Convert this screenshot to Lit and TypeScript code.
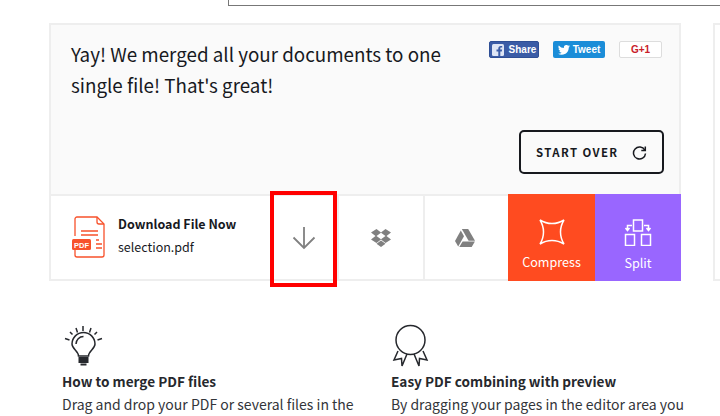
import { LitElement, html, css } from "lit";
import { customElement } from "lit/decorators.js";

@customElement("app-root")
export class AppRoot extends LitElement {
  static styles = css`
    :host { display: block; width: 720px; height: 416px; overflow: hidden; position: relative; background: #fff; font-family: "Noto Sans CJK JP", "Noto Sans", sans-serif; color: #17191e; }
    .topbar { position: absolute; left: 228px; top: -10px; right: -4px; height: 14px; border: 1px solid #777; border-width: 1px 0 1px 1px; }
    .page { display: flex; gap: 32px; padding: 23px 0 0 49px; width: 800px; box-sizing: border-box; }
    .card { width: 632px; height: 258px; box-sizing: border-box; border: 2px solid #eee; border-bottom: 0; border-right: 0; background: #fafafa; display: flex; flex-direction: column; flex: none; }
    .side { width: 100px; height: 258px; box-sizing: border-box; border: 2px solid #eee; background: #fff; flex: none; }
    .hero { height: 169px; box-sizing: border-box; padding: 13px 17px 0 20px; border-right: 2px solid #eee; display: grid; grid-template-columns: 1fr auto; position: relative; }
    .msg { margin: 0; font-size: 18.8px; line-height: 31px; width: 400px; color: #17191e; }
    .social { display: flex; gap: 14px; align-items: flex-start; margin-top: 3px; }
    .btn { height: 17px; box-sizing: border-box; border-radius: 2px; color: #fff; display: flex; align-items: center; justify-content: center; font: bold 10px "Liberation Sans", sans-serif; gap: 5px; }
    .fb { width: 50px; background: #3b5ca6; border: 1px solid #2f4f95; }
    .tw { width: 52px; background: #1b8dd8; gap: 3px; }
    .gp { width: 43px; background: #fff; border: 1px solid #ddd; color: #c9202a; }
    .start { position: absolute; right: 15px; top: 105px; width: 145px; height: 44px; box-sizing: border-box; border: 2px solid #17191e; border-radius: 5px; display: flex; align-items: center; padding-left: 15px; gap: 14px; font-size: 11.4px; font-weight: 700; letter-spacing: 1.4px; }
    .row { height: 87px; display: flex; background: #fff; border-top: 2px solid #eee; border-bottom: 2px solid #eee; box-sizing: border-box; }
    .cell { display: flex; align-items: center; justify-content: center; border-right: 2px solid #eee; box-sizing: border-box; color: #808080; flex: none; }
    .dl { width: 219px; border-right: 0; justify-content: flex-start; padding-left: 21px; gap: 12px; }
    .dl svg { margin-top: -2px; }
    .names { margin-top: -6px; }
    .dl .t { font-size: 12.5px; font-weight: 700; color: #17191e; line-height: 23px; }
    .dl .f { font-size: 12.5px; color: #17191e; line-height: 23px; }
    .arrow { width: 69px; }
    .box { width: 86px; }
    .drive { width: 83px; border-right: 0; padding-right: 3px; }
    .act { flex-direction: column; margin: -2px 0; padding-top: 15px; color: #fff; font-size: 12.6px; gap: 7px; border: 0; }
    .compress { width: 87px; background: #ff4b20; }
    .split { width: 86px; background: #9966ff; }
    .hl { position: absolute; left: 270px; top: 191px; width: 67px; height: 96px; box-sizing: border-box; border: 4px solid #f00; }
    .info { display: grid; grid-template-columns: 329px 329px; padding: 0 0 0 62px; margin-top: 45px; }
    .info .ic { height: 44px; display: block; margin-left: 1px; overflow: visible; }
    .info h3 { margin: 0; font-size: 13.6px; line-height: 23px; font-weight: 700; color: #26282d; }
    .info p { margin: 0; font-size: 14px; line-height: 23px; white-space: nowrap; color: #33353a; }
  `;
  render() {
    return html`
      <div class="topbar"></div>
      <div class="page">
        <div class="card">
          <div class="hero">
            <p class="msg">Yay! We merged all your documents to one single file! That's great!</p>
            <div class="social">
              <div class="btn fb"><svg width="12" height="12" viewBox="0 0 12 12"><rect width="12" height="12" rx="1.5" fill="#dfe6f5"/><path d="M8.3 12V7.4h1.5l.3-1.8H8.3V4.5c0-.6.2-.9.9-.9h1V2c-.4 0-.9-.1-1.4-.1-1.5 0-2.5.9-2.5 2.5v1.2H4.5v1.8h1.8V12z" fill="#3b5ca6"/></svg>Share</div>
              <div class="btn tw"><svg width="12" height="10" viewBox="0 0 24 20"><path fill="#fff" d="M24 2.4c-.9.4-1.8.7-2.8.8 1-.6 1.8-1.6 2.2-2.7-1 .6-2 1-3.1 1.2A4.9 4.9 0 0 0 11.900 6.200 14 14 0 0 1 1.700.9a4.900 4.900 0 0 0 1.500 6.600c-.8 0-1.600-.2-2.200-.6v.1c0 2.400 1.700 4.400 3.900 4.800-.7.2-1.500.2-2.200.1.600 2 2.400 3.400 4.600 3.400A9.900 9.900 0 0 1 0 17.300 14 14 0 0 0 7.500 19.500c9.100 0 14-7.500 14-14v-.6c1-.7 1.800-1.600 2.500-2.500z"/></svg>Tweet</div>
              <div class="btn gp">G+1</div>
            </div>
            <div class="start">START OVER
              <svg width="15" height="15" viewBox="0 0 15 15" fill="none" stroke="#17191e" stroke-width="1.500"><path d="M12.800 5.200A6 6 0 1 0 13.500 8.500"/><path d="M13.300 1.500v4h-4"/></svg>
            </div>
          </div>
          <div class="row">
            <div class="cell dl">
              <svg width="34" height="44" viewBox="0 0 34 44" fill="none" stroke="#f7512b" stroke-width="1.300">
                <path d="M3 21V4a2 2 0 0 1 2-2h20l7 7v31a2 2 0 0 1-2 2H5a2 2 0 0 1-2-2v-6"/>
                <path d="M25 2v5a2 2 0 0 0 2 2h5"/>
                <path d="M9 16h17M9 20h17"/>
                <path d="M24 25h3M24 29h6M24 33h6"/>
                <rect x="0" y="24" width="19" height="11" rx="1.500" fill="#f7512b" stroke="none"/>
                <text x="9.500" y="32.500" text-anchor="middle" font-size="7.500" font-weight="700" fill="#fff" stroke="none" font-family="Liberation Sans, sans-serif">PDF</text>
              </svg>
              <div class="names"><div class="t">Download File Now</div><div class="f">selection.pdf</div></div>
            </div>
            <div class="cell arrow"><svg width="24" height="24" viewBox="0 0 24 24" fill="none" stroke="#808080" stroke-width="1.800"><path d="M12 1v21M1.500 11.500 12 22l10.500-10.500"/></svg></div>
            <div class="cell box"><svg width="20" height="18" viewBox="0 0 20 18" fill="#808080"><path d="M5.500 0 0 3.500 4.500 7 0 10.500l5.500 3.500L10 10.500 14.500 14 20 10.500 15.500 7 20 3.500 14.500 0 10 3.500zM10 3.800 14.500 7 10 10.200 5.500 7zM5.500 14.800l4.500 3.200 4.500-3.200L10 11.600z"/></svg></div>
            <div class="cell drive"><svg width="20" height="18" viewBox="0 0 20 18" fill="#808080"><path d="M6.800 0h6.400l6.800 11.700h-6.400z"/><path d="M5.800 1.600 9 7.200 3.200 17.500 0 12z"/><path d="M4.300 18l3.300-5.600h12.300L16.700 18z"/></svg></div>
            <div class="cell act compress">
              <svg width="26" height="26" viewBox="0 0 26 26" fill="none" stroke="#fff" stroke-width="1.500"><path d="M1 1C5 3.500 9 4.500 13 4.500S21 3.500 25 1C22.500 5 21.500 9 21.500 13S22.500 21 25 25C21 22.500 17 21.500 13 21.500S5 22.500 1 25C3.500 21 4.500 17 4.500 13S3.500 5 1 1z"/></svg>
              Compress</div>
            <div class="cell act split">
              <svg width="28" height="27" viewBox="0 0 28 27" fill="none" stroke="#fff" stroke-width="1.500"><rect x="9.500" y="1" width="9" height="11"/><rect x="1.500" y="15.500" width="9" height="11"/><rect x="17.500" y="15.500" width="9" height="11"/><path d="M8 6.500H3.500v5M1.500 9l2 2.500 2-2.500M20 6.500h4.500v5M22.500 9l2 2.500 2-2.500"/></svg>
              Split</div>
          </div>
        </div>
        <div class="side"></div>
      </div>
      <div class="hl"></div>
      <div class="info">
        <div>
          <svg class="ic" width="44" height="44" viewBox="0 0 44 44" fill="none" stroke="#26282d" stroke-width="1.500">
            <path d="M15.500 30c0-5-6.500-7-6.500-12a11.500 11.500 0 0 1 23 0c0 5-6.500 7-6.500 12z"/>
            <path d="M13 18a7.500 7.500 0 0 1 7.500-7.500"/>
            <path d="M15.500 32h10M15.500 34h10M15.500 36h10M17.500 38.500h6" stroke-width="1.800"/>
            <path d="M20 0v5M13 2l1.500 4.500M7 6l2.500 2.500M2 12.500l4.500 1.500M28 2l-1.500 4.500M34 6l-2.500 2.500M39 12.500 34.500 14"/>
          </svg>
          <h3>How to merge PDF files</h3>
          <p>Drag and drop your PDF or several files in the</p>
        </div>
        <div>
          <svg class="ic" width="44" height="44" viewBox="0 0 44 44" fill="none" stroke="#26282d" stroke-width="1.500">
            <circle cx="18.500" cy="14" r="14.500"/>
            <path d="M6 25 2 34l7.500-1.500L10 40l5-12M31 25l4 9-7.500-1.500L27 40l-5-12"/>
          </svg>
          <h3>Easy PDF combining with preview</h3>
          <p>By dragging your pages in the editor area you</p>
        </div>
      </div>
    `;
  }
}
